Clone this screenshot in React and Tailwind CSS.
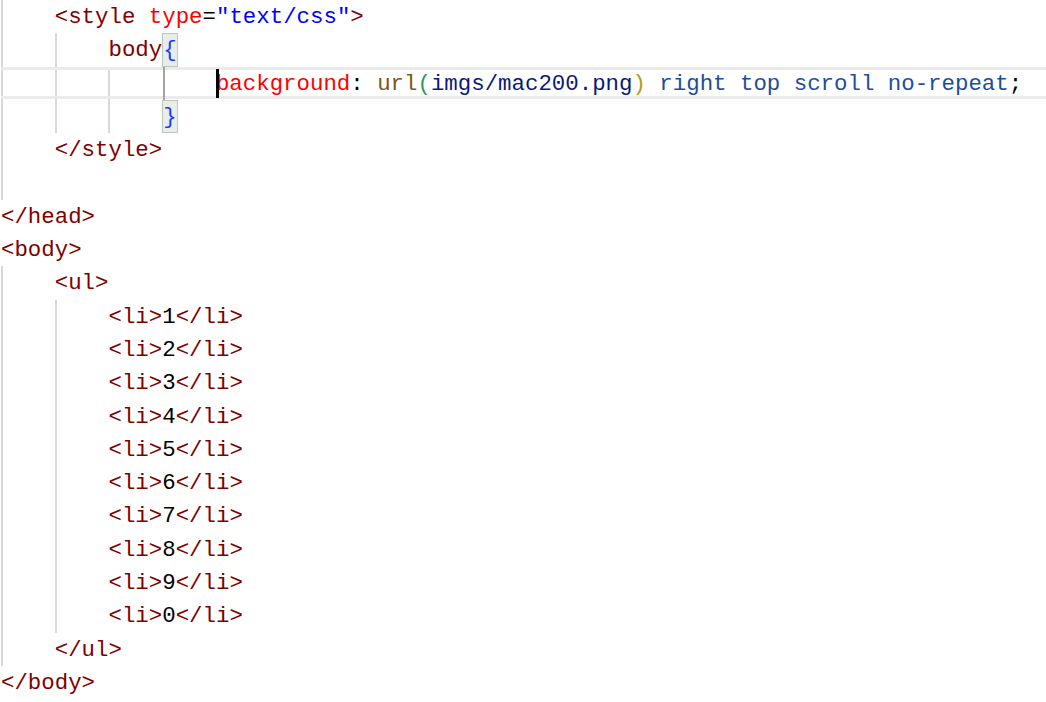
const C = {
  tag:   'text-[#800000]',
  attr:  'text-[#ff0000]',
  plain: 'text-black',
  value: 'text-[#0000ff]',
  prop:  'text-[#ff0000]',
  fn:    'text-[#7a5a14]',
  open:  'text-[#2f9a4e]',
  path:  'text-[#0a1a7a]',
  close: 'text-[#b59a12]',
  kw:    'text-[#1c4da1]',
};

const t = (text, cls) => ({ text, cls });

const li = n => [t('<li>', C.tag), t(String(n), C.plain), t('</li>', C.tag)];

// guides = indent levels that show a guide line, dark = level of the matched-brace guide
const LINES = [
  { indent: 1, guides: [0], tokens: [t('<style ', C.tag), t('type', C.attr), t('=', C.plain), t('"text/css"', C.value), t('>', C.tag)] },
  { indent: 2, guides: [0, 1], tokens: [t('body', C.tag)], brace: '{' },
  {
    indent: 4, guides: [0, 1, 2], dark: 3, current: true, cursor: true,
    tokens: [
      t('background', C.prop), t(': ', C.plain), t('url', C.fn), t('(', C.open),
      t('imgs/mac200.png', C.path), t(')', C.close), t(' right top scroll no-repeat', C.kw), t(';', C.plain),
    ],
  },
  { indent: 3, guides: [0, 1, 2], tokens: [], brace: '}' },
  { indent: 1, guides: [0], tokens: [t('</style>', C.tag)] },
  { indent: 0, guides: [0], tokens: [] },
  { indent: 0, guides: [], tokens: [t('</head>', C.tag)] },
  { indent: 0, guides: [], tokens: [t('<body>', C.tag)] },
  { indent: 1, guides: [0], tokens: [t('<ul>', C.tag)] },
  ...[1, 2, 3, 4, 5, 6, 7, 8, 9, 0].map(n => ({ indent: 2, guides: [0, 1], tokens: li(n) })),
  { indent: 1, guides: [0], tokens: [t('</ul>', C.tag)] },
  { indent: 0, guides: [], tokens: [t('</body>', C.tag)] },
];

function CodeLine({ line }) {
  const levels = Math.max(line.indent, line.guides.length ? Math.max(...line.guides) + 1 : 0);
  return (
    <div className="relative flex h-[33.3px] items-stretch whitespace-pre">
      {line.current && (
        <div className="pointer-events-none absolute inset-x-0 top-0 bottom-[1px] border-y-[3px] border-[#ebebeb]" />
      )}
      {Array.from({ length: levels }).map((_, i) => (
        <span
          key={i}
          className={`inline-block w-[4ch] shrink-0 ${line.guides.includes(i) ? 'border-l-2 border-[#d9d9d9]' : ''}`}
        />
      ))}
      {line.dark !== undefined && (
        <span className="absolute top-0 h-full w-[2px] bg-[#a3a3a3]" style={{ left: `calc(${line.dark * 4}ch + 1px)` }} />
      )}
      <span className="relative flex translate-y-[1px] items-center leading-[33.3px]">
        {line.cursor && (
          <span className="absolute left-0 top-[1px] h-[29px] w-[3px] bg-black" />
        )}
        {line.tokens.map((tok, i) => (
          <span key={i} className={tok.cls}>{tok.text}</span>
        ))}
      </span>
      {line.brace && (
        <span className="inline-flex h-full items-center border border-[#bcc6bc] bg-[#e7ede7] pt-[1px] text-[#1a3cff] leading-none">
          {line.brace}
        </span>
      )}
    </div>
  );
}

export default function App() {
  return (
    <div className="h-[702px] w-[1046px] overflow-hidden bg-white pl-[1px] font-['Liberation_Mono',monospace] text-[22.4px]">
      {LINES.map((line, i) => (
        <CodeLine key={i} line={line} />
      ))}
    </div>
  );
}
